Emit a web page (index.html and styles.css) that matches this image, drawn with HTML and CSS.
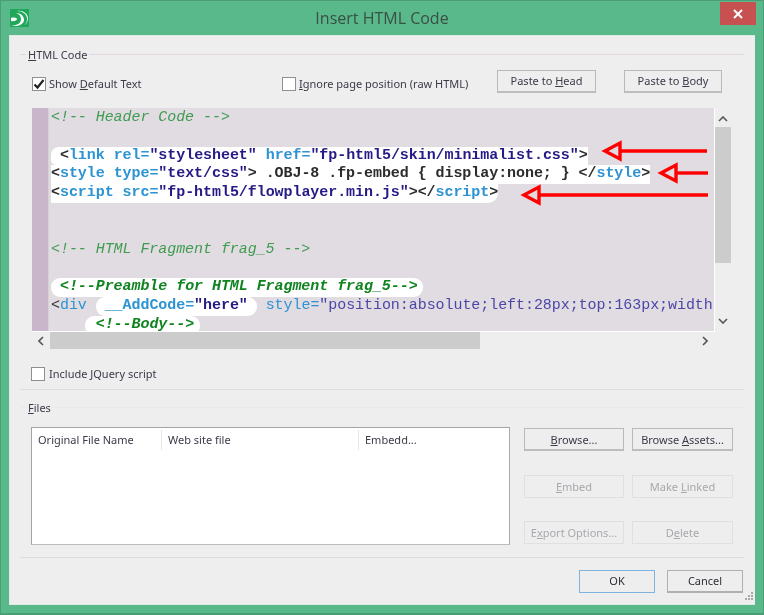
FILE: index.html
```html
<!DOCTYPE html>
<html lang="en">
<head>
<meta charset="utf-8">
<title>Insert HTML Code</title>
<link rel="stylesheet" href="styles.css">
</head>
<body>
<div class="window">
  <header class="titlebar">
    <svg class="app-icon" width="19" height="18" viewBox="0 0 19 18"><rect width="19" height="18" fill="#1fa85a"/><path d="M1 16c5 1 10-1 10-6 0-3-2-5-5-6 5 0 8 3 8 7 0 4-7 8-13 5z" fill="#fff"/><path d="M7 2c5 0 10 3 10 8 0 3-1 5-3 6 3-1 4-4 4-7 0-4-5-8-11-7z" fill="#fff" opacity=".85"/><path d="M1 9c3-1 6 0 6 1s-3 3-6 2z" fill="#fff"/></svg>
    <h1 class="title">Insert HTML Code</h1>
    <button class="close" type="button" aria-label="Close"><svg width="10" height="10" viewBox="0 0 10 10"><path d="M1 1l8 8M9 1l-8 8" stroke="#fff" stroke-width="2"/></svg></button>
  </header>
  <main class="client">
    <div class="group-head"><span class="group-label"><u>H</u>TML Code</span></div>
    <div class="options">
      <label class="check"><span class="box"><svg width="12" height="12" viewBox="0 0 12 12"><path d="M1.5 6.5l3 3 6-7.5" fill="none" stroke="#222" stroke-width="2.2"/></svg></span><span>Show <u>D</u>efault Text</span></label>
      <label class="check"><span class="box"></span><span><u>I</u>gnore page position (raw HTML)</span></label>
      <button class="btn btn-paste-head" type="button">Paste to <u>H</u>ead</button>
      <button class="btn btn-paste-body" type="button">Paste to <u>B</u>ody</button>
    </div>
    <section class="editor">
      <div class="code-pane">
        <div class="gutter"></div>
        <div class="code">
          <div class="ln cm">&lt;!-- Header Code --&gt;</div>
          <div class="ln"></div>
          <div class="ln"><span class="hl hl-top"> <b class="p">&lt;</b><b class="t">link</b> <b class="t">rel=</b><b class="s">"stylesheet"</b> <b class="t">href=</b><b class="s">"fp-html5/skin/minimalist.css"</b><b class="p">&gt;</b></span></div>
          <div class="ln"><span class="hl"><b class="p">&lt;</b><b class="t">style</b> <b class="t">type=</b><b class="s">"text/css"</b><b class="p">&gt; .OBJ-8 .fp-embed { display:none; } &lt;/</b><b class="t">style</b><b class="p">&gt;</b></span></div>
          <div class="ln"><span class="hl hl-bottom"><b class="p">&lt;</b><b class="t">script</b> <b class="t">src=</b><b class="s">"fp-html5/flowplayer.min.js"</b><b class="p">&gt;&lt;/</b><b class="t">script</b><b class="p">&gt;</b></span></div>
          <div class="ln"></div>
          <div class="ln"></div>
          <div class="ln cm">&lt;!-- HTML Fragment frag_5 --&gt;</div>
          <div class="ln"></div>
          <div class="ln cm"><span class="hl hl-pill hl-end"> <b class="cmb">&lt;!--Preamble for HTML Fragment frag_5--&gt;</b></span></div>
          <div class="ln"><span class="p">&lt;</span><span class="t">div</span> <span class="hl hl-pill"> <b class="t">__AddCode=</b><b class="s">"here"</b> </span> <span class="t">style=</span><span class="s2">"position:absolute;left:28px;top:163px;width</span></div>
          <div class="ln"><span class="sp">    </span><span class="hl hl-pill hl-body"> <b class="cmb">&lt;!--Body--&gt;</b></span></div>
        </div>
      </div>
      <div class="vscroll">
        <svg class="chev" width="10" height="6" viewBox="0 0 10 6"><path d="M1 5l4-4 4 4" fill="none" stroke="#555" stroke-width="1.6"/></svg>
        <div class="vthumb"></div>
        <svg class="chev chev-down" width="10" height="6" viewBox="0 0 10 6"><path d="M1 1l4 4 4-4" fill="none" stroke="#555" stroke-width="1.6"/></svg>
      </div>
      <div class="hscroll">
        <svg class="hchev" width="6" height="10" viewBox="0 0 6 10"><path d="M5 1L1 5l4 4" fill="none" stroke="#555" stroke-width="1.6"/></svg>
        <div class="hthumb"></div>
        <svg class="hchev hchev-right" width="6" height="10" viewBox="0 0 6 10"><path d="M1 1l4 4-4 4" fill="none" stroke="#555" stroke-width="1.6"/></svg>
      </div>
    </section>
    <label class="check check-jquery"><span class="box"></span><span>Include JQuery script</span></label>
    <div class="rule rule-files"></div>
    <div class="group-head group-files"><span class="group-label"><u>F</u>iles</span></div>
    <div class="files-row">
      <div class="table">
        <div class="thead">
          <div class="th th1">Original File Name</div>
          <div class="th th2">Web site file</div>
          <div class="th th3">Embedd...</div>
        </div>
      </div>
      <div class="file-btns">
        <button class="btn" type="button"><u>B</u>rowse...</button>
        <button class="btn" type="button">Browse <u>A</u>ssets...</button>
        <button class="btn" type="button" disabled><u>E</u>mbed</button>
        <button class="btn" type="button" disabled>Make <u>L</u>inked</button>
        <button class="btn" type="button" disabled>E<u>x</u>port Options...</button>
        <button class="btn" type="button" disabled>D<u>e</u>lete</button>
      </div>
    </div>
    <div class="rule rule-foot"></div>
    <footer class="footer">
      <button class="btn btn-ok" type="button">OK</button>
      <button class="btn btn-cancel" type="button">Cancel</button>
    </footer>
    <svg class="grip" width="11" height="10" viewBox="0 0 11 10"><g fill="#a9a9a9"><rect x="8" y="0" width="2" height="2"/><rect x="5" y="3" width="2" height="2"/><rect x="8" y="3" width="2" height="2"/><rect x="2" y="6" width="2" height="2"/><rect x="5" y="6" width="2" height="2"/><rect x="8" y="6" width="2" height="2"/></g></svg>
  </main>
  <svg class="arrows" width="764" height="615" viewBox="0 0 764 615">
    <g fill="none" stroke="#f00" stroke-width="3.4">
      <path d="M707 151H621"/><path d="M605 151l15-8v16z"/>
      <path d="M708 173H676"/><path d="M661 173l15-8v16z"/>
      <path d="M708 195H539"/><path d="M524 195l15-8v16z"/>
    </g>
  </svg>
</div>
</body>
</html>
```
FILE: styles.css
```css
* { box-sizing: border-box; }
html, body { margin: 0; padding: 0; }
body {
  width: 764px;
  height: 615px;
  overflow: hidden;
  font-family: "Noto Sans", sans-serif;
  font-size: 11px;
  color: #3c3a48;
}
u { text-underline-offset: 1px; }
.window {
  position: relative;
  width: 764px;
  height: 615px;
  display: flex;
  flex-direction: column;
  padding: 0 8px 8px 8px;
  background: #59b98a;
  border: 1px solid #4b9d76;
  border-width: 1px 1px 2px 1px;
  filter: blur(0.35px);
}
.titlebar {
  height: 34px;
  flex: none;
  margin-left: -8px;
  margin-right: -8px;
  display: grid;
  grid-template-columns: 1fr auto 1fr;
  align-items: start;
}
.app-icon { margin: 8px 0 0 9px; }
.title {
  margin: 6px 0 0;
  font-size: 16px;
  line-height: 22px;
  font-weight: 400;
  color: #3a4f47;
  font-family: "Open Sans", sans-serif;
}
.close {
  justify-self: end;
  width: 36px;
  height: 23px;
  margin: 1px 7px 0 0;
  padding: 0;
  border: 0;
  background: #c75050;
  display: flex;
  align-items: center;
  justify-content: center;
}
.client {
  position: relative;
  flex: 1;
  padding: 10px 11px 0 10px;
  background: #eeeeee;
  border: 1px solid #dfe8e3;
  border-width: 1px 0 1px 1px;
}
.group-head {
  display: flex;
  align-items: center;
  height: 16px;
  gap: 2px;
}
.group-head::before { content: ""; width: 6px; height: 1px; background: #e0d8dc; }
.group-head::after { content: ""; flex: 1; height: 1px; background: #e0d8dc; }
.group-files::after, .group-files::before { background: #ebe8e9; }
.options {
  display: grid;
  grid-template-columns: 250px 215px 127px 98px;
  align-items: center;
  height: 22px;
  margin: 8px 0 0 12px;
}
.check { display: flex; align-items: center; gap: 3px; line-height: 16px; }
.options .check { margin-top: 4px; }
.check-jquery .box + span { margin-left: 1px; }
.box {
  width: 14px;
  height: 14px;
  flex: none;
  background: #fff;
  border: 1px solid #8f8f93;
  display: flex;
  align-items: center;
  justify-content: center;
}
.btn {
  height: 23px;
  padding: 0;
  font: inherit;
  color: inherit;
  background: #eeeeee;
  border: 1px solid #b9b9b9;
  border-bottom: 2px solid #bdbdbd;
}
.btn:disabled {
  color: #a9a7ad;
  border: 1px solid #e0e0e0;
}
.options .btn { padding-bottom: 2px; }
.btn-paste-head { width: 99px; }
.btn-paste-body { width: 98px; }
.editor {
  display: grid;
  grid-template-columns: 683px 16px;
  grid-template-rows: 224px 17px;
  width: 699px;
  margin: 16px 0 0 12px;
}
.code-pane {
  display: flex;
  overflow: hidden;
  background: #e1dbe2;
  border-right: 1px solid #fff;
  border-bottom: 1px solid #fff;
}
.gutter { width: 17px; flex: none; background: #c9b6cb; border-right: 1px solid #d6d2d6; }
.code {
  flex: 1;
  padding: 1px 0 0 2px;
  font-family: "Liberation Mono", monospace;
  font-size: 15px;
  letter-spacing: -0.06px;
  line-height: 18.8px;
  overflow: hidden;
  color: #444;
}
.ln { height: 18.8px; white-space: pre; }
.cm { color: #3f9c50; font-style: italic; }
.hl { display: inline-block; height: 18.8px; background: #fff; vertical-align: top; }
.hl-top { border-radius: 8px 0 0 5px; }
.hl-bottom { border-radius: 0 0 10px 0; }
.hl-pill { border-radius: 9px; }
.hl-end { padding-right: 5px; }
.hl-body { padding-right: 6px; margin-left: -2px; padding-left: 2px; }
.p { color: #2c2c2c; font-style: normal; }
.t { color: #2d93d2; font-style: normal; }
.s { color: #251a86; }
.s2 { color: #4c47a6; }
.cmb { color: #0f8420; font-style: italic; }
.vscroll { position: relative; background: #eeeeee; }
.chev { position: absolute; left: 3px; top: 8px; }
.chev-down { top: auto; bottom: 8px; }
.vthumb { position: absolute; left: 0; right: 0; top: 19px; height: 136px; background: #cccccc; }
.hscroll { grid-column: 1 / 2; position: relative; background: #eeeeee; }
.hchev { position: absolute; left: 6px; top: 4px; }
.hchev-right { left: auto; right: 7px; }
.hthumb { position: absolute; left: 18px; top: 0; bottom: 0; width: 430px; background: #cccccc; }
.check-jquery { margin: 18px 0 0 11px; height: 14px; }
.rule { height: 1px; background: #e0dbdd; }
.rule-files { margin-top: 8px; }
.group-files { margin-top: 9px; }
.files-row { display: flex; gap: 14px; margin: 12px 0 0 11px; }
.table {
  width: 479px;
  height: 118px;
  background: #fff;
  border: 1px solid #a4a4a8;
  border-bottom-color: #bcbcbc;
  border-right-color: #a9a9a9;
}
.thead { display: grid; grid-template-columns: 130px 197px 1fr; padding-top: 2px; }
.th { height: 20px; line-height: 20px; padding-left: 6px; border-right: 1px solid #e6e6e6; }
.th3 { border-right: 0; }
.file-btns {
  display: grid;
  grid-template-columns: 100px 101px;
  grid-template-rows: 47px 46px 23px;
  column-gap: 8px;
  align-items: start;
  margin-top: 1px;
}
.rule-foot { margin-top: 12px; background: #dcdcdc; }
.footer { display: flex; justify-content: flex-end; gap: 12px; margin: 12px 1px 0 0; }
.btn-ok { width: 76px; color: #2e2e38; border: 1px solid #7fb4e0; padding-bottom: 2px; }
.btn-cancel { width: 76px; color: #2e2e38; border-color: #b0b0b0; padding-bottom: 2px; }
.grip { position: absolute; right: 1px; bottom: 2px; }
.arrows { position: absolute; left: -1px; top: -1px; pointer-events: none; }
```
